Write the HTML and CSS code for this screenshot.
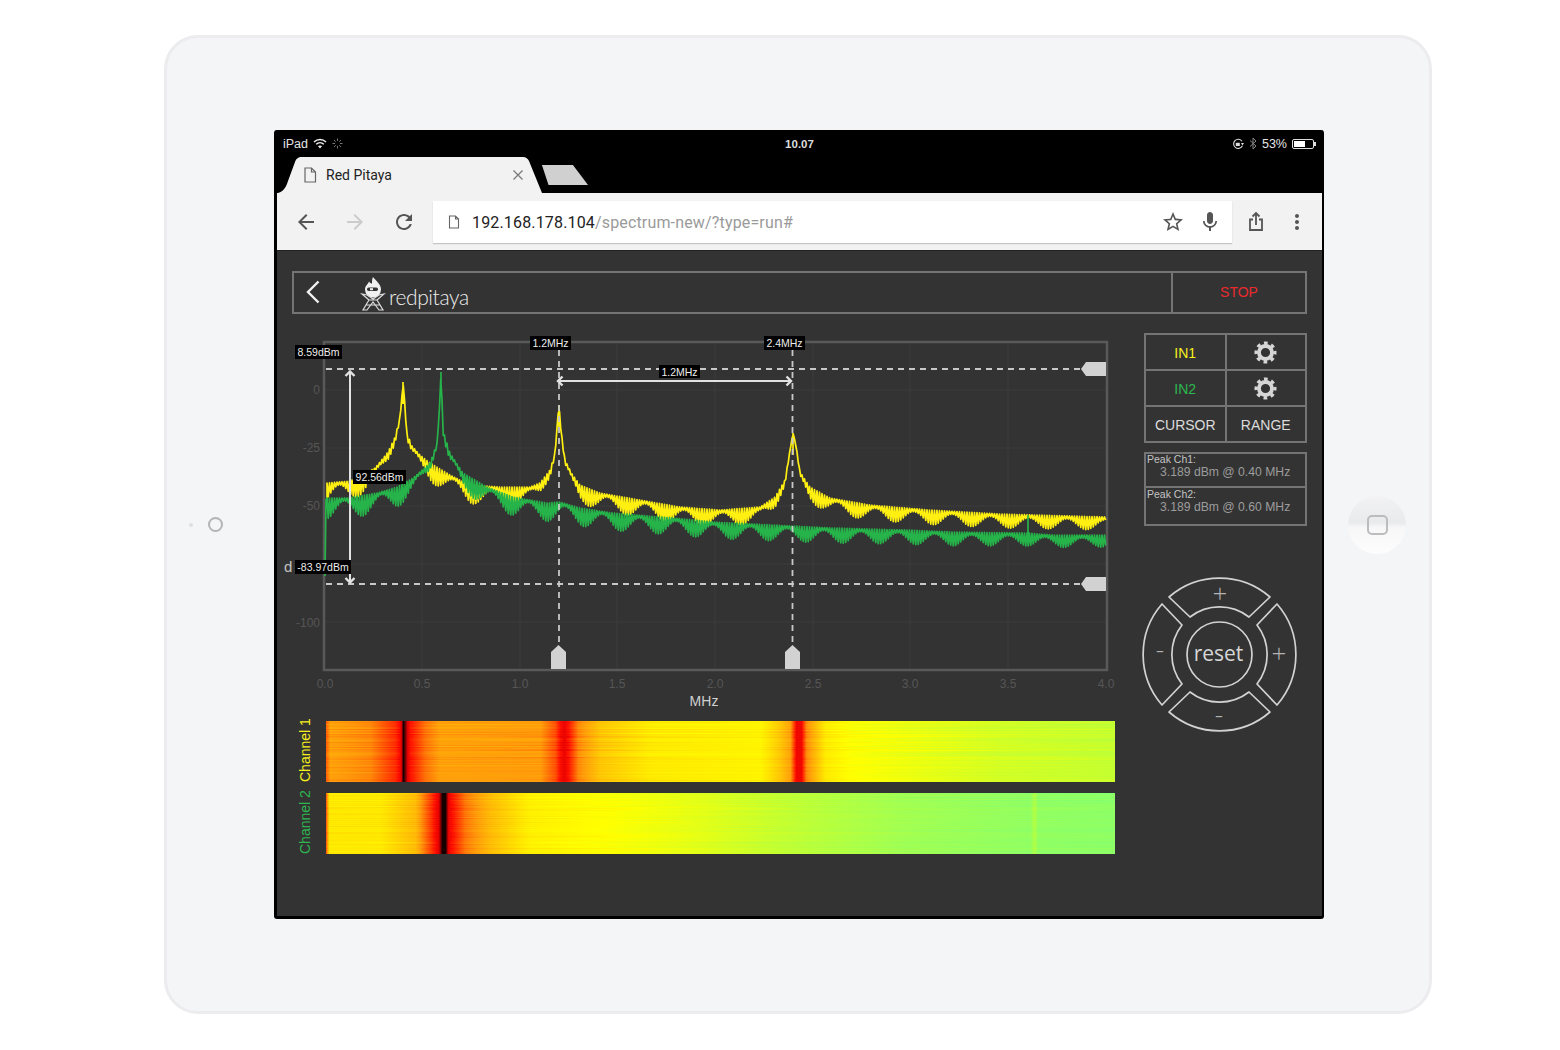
FILE: index.html
```html
<!DOCTYPE html>
<html lang="en">
<head>
    <meta charset="UTF-8">
    <meta name="viewport" content="width=device-width, initial-scale=1.0">
    <title>Red Pitaya Spectrum Analyzer</title>
    <link rel="stylesheet" href="styles.css">
</head>
<body>
    <div class="device">
        <div class="sensors">
            <span class="sensor-dot"></span>
            <span class="camera"></span>
        </div>
        <div class="screen">
            <div class="status-bar">
                <div class="status-left">
                    <span>iPad</span>
                    <svg class="wifi" width="14" height="11" viewBox="0 0 14 11">
                        <path d="M1 4 C4.5 0.8 9.5 0.8 13 4" fill="none" stroke="#eee" stroke-width="1.5"/>
                        <path d="M3.2 6.2 C5.4 4.2 8.6 4.2 10.8 6.2" fill="none" stroke="#eee" stroke-width="1.5"/>
                        <path d="M5 8.2 L7 10.4 L9 8.2 C7.8 7.2 6.2 7.2 5 8.2Z" fill="#eee"/>
                    </svg>
                    <svg class="spinner" width="11" height="11" viewBox="0 0 11 11">
                        <path d="M5.5 0.5V3M5.5 8V10.5M0.5 5.5H3M8 5.5H10.5M2 2L3.7 3.7M7.3 7.3L9 9M2 9L3.7 7.3M7.3 3.7L9 2" stroke="#777" stroke-width="1"/>
                    </svg>
                </div>
                <div class="status-time">10.07</div>
                <div class="status-right">
                    <svg width="12" height="12" viewBox="0 0 12 12">
                        <path d="M10 3.2 A4.6 4.6 0 1 0 10.4 7.8" fill="none" stroke="#ddd" stroke-width="1.1"/>
                        <path d="M9 5 L12 5 L10.4 7.6Z" fill="#ddd"/>
                        <rect x="3.8" y="4.8" width="4" height="3.2" fill="#ddd"/>
                    </svg>
                    <svg width="8" height="13" viewBox="0 0 8 13">
                        <path d="M1 3.5 L7 9 L4 12 V1 L7 4 L1 9.5" fill="none" stroke="#888" stroke-width="1"/>
                    </svg>
                    <span>53%</span>
                    <span class="battery"><span class="battery-fill"></span></span>
                </div>
            </div>
            <div class="tab-strip">
                <div class="tab">
                    <svg width="14" height="16" viewBox="0 0 14 16">
                        <path d="M2 1 H8.5 L12.5 5 V15 H2Z M8.5 1 V5 H12.5" fill="none" stroke="#666" stroke-width="1.2"/>
                    </svg>
                    <span class="tab-title">Red Pitaya</span>
                    <svg class="tab-close" width="10" height="10" viewBox="0 0 10 10">
                        <path d="M0.5 0.5 L9.5 9.5 M9.5 0.5 L0.5 9.5" stroke="#777" stroke-width="1.2"/>
                    </svg>
                </div>
                <div class="new-tab"></div>
            </div>
            <div class="toolbar">
                <div class="nav-button">
                    <svg width="24" height="24" viewBox="0 0 24 24"><path fill="#555" d="M20 11H7.83l5.59-5.59L12 4l-8 8 8 8 1.41-1.41L7.83 13H20v-2z"/></svg>
                </div>
                <div class="nav-button">
                    <svg width="24" height="24" viewBox="0 0 24 24"><path fill="#ccc" d="M12 4l-1.41 1.41L16.17 11H4v2h12.17l-5.58 5.59L12 20l8-8z"/></svg>
                </div>
                <div class="nav-button">
                    <svg width="24" height="24" viewBox="0 0 24 24"><path fill="#555" d="M17.65 6.35C16.2 4.9 14.21 4 12 4c-4.42 0-7.99 3.58-7.99 8s3.57 8 7.99 8c3.73 0 6.84-2.55 7.73-6h-2.08c-.82 2.33-3.04 4-5.65 4-3.31 0-6-2.69-6-6s2.69-6 6-6c1.66 0 3.14.69 4.22 1.78L13 11h7V4l-2.35 2.35z"/></svg>
                </div>
                <div class="url-box">
                    <svg width="12" height="14" viewBox="0 0 12 14">
                        <path d="M1.5 1 H7.5 L10.5 4 V13 H1.5Z M7.5 1 V4 H10.5" fill="none" stroke="#666" stroke-width="1.1"/>
                    </svg>
                    <span class="url-text"><span class="url-host">192.168.178.104</span>/spectrum-new/?type=run#</span>
                    <div class="url-icon">
                        <svg width="24" height="24" viewBox="0 0 24 24"><path fill="#555" d="M22 9.24l-7.19-.62L12 2 9.19 8.63 2 9.24l5.46 4.73L5.82 21 12 17.27 18.18 21l-1.63-7.03L22 9.24zM12 15.4l-3.76 2.27 1-4.28-3.32-2.88 4.38-.38L12 6.1l1.71 4.04 4.38.38-3.32 2.88 1 4.28L12 15.4z"/></svg>
                    </div>
                    <div class="url-icon">
                        <svg width="24" height="24" viewBox="0 0 24 24"><path fill="#555" d="M12 14c1.66 0 2.99-1.34 2.99-3L15 5c0-1.66-1.34-3-3-3S9 3.34 9 5v6c0 1.66 1.34 3 3 3zm5.3-3c0 3-2.54 5.1-5.3 5.1S6.7 14 6.7 11H5c0 3.41 2.72 6.23 6 6.72V21h2v-3.28c3.28-.48 6-3.3 6-6.72h-1.7z"/></svg>
                    </div>
                </div>
                <div class="tool-button">
                    <svg width="24" height="24" viewBox="0 0 24 24"><path d="M9 9.5H6V20H18V9.5H15M12 15V3.5M8.5 6.5L12 3L15.5 6.5" fill="none" stroke="#555" stroke-width="1.8"/></svg>
                </div>
                <div class="tool-button">
                    <svg width="24" height="24" viewBox="0 0 24 24"><path fill="#555" d="M12 8c1.1 0 2-.9 2-2s-.9-2-2-2-2 .9-2 2 .9 2 2 2zm0 2c-1.1 0-2 .9-2 2s.9 2 2 2 2-.9 2-2-.9-2-2-2zm0 6c-1.1 0-2 .9-2 2s.9 2 2 2 2-.9 2-2-.9-2-2-2z"/></svg>
                </div>
            </div>
            <div class="app">
                <header class="app-header">
                    <svg class="back-chevron" width="14" height="24" viewBox="0 0 14 24">
                        <path d="M12.5 1.5 L2 12 L12.5 22.5" fill="none" stroke="#f2f2f2" stroke-width="2.4"/>
                    </svg>
                    <div class="logo">
                        <svg width="26" height="36" viewBox="360 276 26 36">
                            <path d="M373 277 C376 281 381 284 381 289.500 A8 8 0 0 1 365 289.500 C365 285.500 368 284.500 369 281.500 C370 283 371 283.500 372 283.500 C372 281 372 279 373 277Z" fill="#f0f0f0"/>
                            <rect x="367" y="287.500" width="11" height="3.500" rx="1.700" fill="#333"/>
                            <rect x="370" y="288.200" width="3" height="2" fill="#f0f0f0"/>
                            <path d="M362 294 L369 300 L363 310 H367 L373 302 L379 310 H383 L377 300 L384 294 L379 295 L373 299 L367 295Z M369 300 L377 300 M366 305 L380 305" fill="none" stroke="#ddd" stroke-width="1.200"/>
                        </svg>
                        <span class="logo-text">redpitaya</span>
                    </div>
                    <div class="stop-button">STOP</div>
                </header>
                <div class="main">
                    <div class="plots">
                        <svg class="chart" width="850" height="387" viewBox="282 334 850 387">
                            <path class="grid" d="M422 342V670M520 342V670M617 342V670M715 342V670M813 342V670M910 342V670M1008 342V670M324 390H1107M324 448H1107M324 506H1107M324 564H1107M324 622H1107"/>
                            <rect class="plot-frame" x="324" y="342" width="783" height="328"/>
                            <g class="tick-y">
                                <text x="320" y="394">0</text>
                                <text x="320" y="452">-25</text>
                                <text x="320" y="510">-50</text>
                                <text x="320" y="627">-100</text>
                            </g>
                            <g class="tick-x">
                                <text x="325" y="688">0.0</text>
                                <text x="422" y="688">0.5</text>
                                <text x="520" y="688">1.0</text>
                                <text x="617" y="688">1.5</text>
                                <text x="715" y="688">2.0</text>
                                <text x="813" y="688">2.5</text>
                                <text x="910" y="688">3.0</text>
                                <text x="1008" y="688">3.5</text>
                                <text x="1106" y="688">4.0</text>
                            </g>
                            <text class="axis-title" x="704" y="706">MHz</text>
                            <path id="trace1" class="trace trace-yellow"/>
                            <path id="trace2" class="trace trace-green"/>
                            <path class="dashed" d="M326 369H1083M326 584H1083M559 350V648M792.500 350V648"/>
                            <path class="handle" d="M1081 369 L1086 362 H1106 V376 H1086Z"/>
                            <path class="handle" d="M1081 584 L1086 577 H1106 V591 H1086Z"/>
                            <path class="handle" d="M551 669 V652 L558.500 645 L566 652 V669Z"/>
                            <path class="handle" d="M785 669 V652 L792.500 645 L800 652 V669Z"/>
                            <path class="measure" d="M350 372V582M558 381H791"/>
                            <path class="measure measure-head" d="M345.500 376L350 371.500L354.500 376M345.500 578L350 582.500L354.500 578M562.500 376.500L558 381L562.500 385.500M786.500 376.500L791 381L786.500 385.500"/>
                            <g class="tags">
                                <rect x="295" y="345" width="47" height="14"/>
                                <text x="318.500" y="356">8.59dBm</text>
                                <rect x="530" y="336" width="41" height="14"/>
                                <text x="550.500" y="347">1.2MHz</text>
                                <rect x="764" y="336" width="41" height="14"/>
                                <text x="784.500" y="347">2.4MHz</text>
                                <rect x="659" y="365" width="41" height="13"/>
                                <text x="679.500" y="375.500">1.2MHz</text>
                                <rect x="353" y="470" width="53" height="14"/>
                                <text x="379.500" y="481">92.56dBm</text>
                                <rect x="295" y="560" width="56" height="14"/>
                                <text x="323" y="571">-83.97dBm</text>
                            </g>
                            <text class="cursor-letter" x="284" y="572">d</text>
                        </svg>
                        <div class="heat-row">
                            <div class="heat-label heat-label-ch1">Channel 1</div>
                            <canvas id="heat1" width="789" height="61"></canvas>
                        </div>
                        <div class="heat-row">
                            <div class="heat-label heat-label-ch2">Channel 2</div>
                            <canvas id="heat2" width="789" height="61"></canvas>
                        </div>
                    </div>
                    <aside class="controls">
                        <svg width="0" height="0" class="defs">
                            <symbol id="gear" viewBox="0 0 24 24">
                                <circle cx="12" cy="12" r="6.800" fill="none" stroke="currentColor" stroke-width="4"/>
                                <circle cx="12" cy="12" r="9.800" fill="none" stroke="currentColor" stroke-width="3.400" stroke-dasharray="3.850 3.847" stroke-dashoffset="1.900"/>
                            </symbol>
                        </svg>
                        <div class="button-grid">
                            <div class="cell cell-in1">IN1</div>
                            <div class="cell cell-gear"><svg width="23" height="23"><use href="#gear"/></svg></div>
                            <div class="cell cell-in2">IN2</div>
                            <div class="cell cell-gear"><svg width="23" height="23"><use href="#gear"/></svg></div>
                            <div class="cell">CURSOR</div>
                            <div class="cell">RANGE</div>
                        </div>
                        <div class="peak-panel">
                            <div class="peak-row">
                                <div class="peak-title">Peak Ch1:</div>
                                <div class="peak-value">3.189 dBm @ 0.40 MHz</div>
                            </div>
                            <div class="peak-row">
                                <div class="peak-title">Peak Ch2:</div>
                                <div class="peak-value">3.189 dBm @ 0.60 MHz</div>
                            </div>
                        </div>
                        <svg class="dpad" width="160" height="160" viewBox="1140 574 160 160">
                            <g class="dpad-shapes">
                                <path id="dpadSeg" d="M1169 597 A77 77 0 0 1 1270 597 L1249 617 A48 48 0 0 0 1190 617Z"/>
                                <use href="#dpadSeg" transform="rotate(90 1219.500 654.500)"/>
                                <use href="#dpadSeg" transform="rotate(180 1219.500 654.500)"/>
                                <use href="#dpadSeg" transform="rotate(270 1219.500 654.500)"/>
                                <circle cx="1219.500" cy="654.500" r="32.500"/>
                            </g>
                            <g class="dpad-signs">
                                <text x="1220" y="603">+</text>
                                <text x="1160" y="659">-</text>
                                <text x="1279" y="663">+</text>
                                <text x="1219" y="724">-</text>
                            </g>
                            <text class="dpad-reset" x="1218.500" y="660.500">reset</text>
                        </svg>
                    </aside>
                </div>
            </div>
        </div>
        <div class="home-area">
            <div class="home-button"><span class="home-square"></span></div>
        </div>
    </div>
    <script src="script.js"></script>
</body>
</html>
```

FILE: styles.css
```css
* {
    box-sizing: border-box;
}
body {
    margin: 0;
    background: #fff;
    font-family: "Liberation Sans", Arial, sans-serif;
}
.device {
    display: flex;
    width: 1268px;
    height: 979px;
    margin: 35px 0 0 164px;
    padding-top: 92px;
    background: #f4f5f7;
    border: 3px solid #ececee;
    border-radius: 34px;
}
.sensors {
    flex: 0 0 107px;
    display: flex;
    align-items: center;
    gap: 15px;
    height: 789px;
    padding-left: 22px;
}
.sensor-dot {
    width: 4px;
    height: 4px;
    border-radius: 50%;
    background: #dfdfe2;
}
.camera {
    width: 15px;
    height: 15px;
    border: 2px solid #b4b4b6;
    border-radius: 50%;
}
.screen {
    display: flex;
    flex-direction: column;
    flex: 0 0 1050px;
    height: 789px;
    background: #000;
    border-style: solid;
    border-color: #000;
    border-width: 0 2px 3px 3px;
    border-radius: 3px;
}
.home-area {
    flex: 1;
    display: flex;
    align-items: center;
    justify-content: center;
    height: 789px;
    padding-left: 1px;
}
.home-button {
    display: flex;
    align-items: center;
    justify-content: center;
    width: 58px;
    height: 58px;
    border-radius: 50%;
    background: linear-gradient(to bottom, #f2f2f4 0%, #e9eaec 46%, #f7f7f8 54%, #fdfdfd 100%);
}
.home-square {
    width: 21px;
    height: 20px;
    border: 2px solid #bcbcbe;
    border-radius: 5px;
}

/* ipad status bar */
.status-bar {
    display: grid;
    grid-template-columns: 1fr auto 1fr;
    align-items: center;
    height: 27px;
    padding: 0 6px;
    color: #e4e4e4;
    font-size: 12.5px;
}
.status-left,
.status-right {
    display: flex;
    align-items: center;
}
.status-left {
    gap: 5px;
}
.status-right {
    justify-content: flex-end;
    gap: 5px;
}
.status-time {
    font-weight: bold;
    font-size: 11.5px;
    color: #ddd;
}
.battery {
    display: block;
    position: relative;
    width: 22px;
    height: 10px;
    margin-right: 2px;
    padding: 1px;
    border: 1px solid #ddd;
    border-radius: 2px;
}
.battery::after {
    content: "";
    position: absolute;
    top: 2px;
    right: -3px;
    width: 2px;
    height: 4px;
    background: #ddd;
}
.battery-fill {
    display: block;
    width: 11px;
    height: 6px;
    background: #fff;
}

/* browser chrome */
.tab-strip {
    display: flex;
    height: 36px;
    padding-left: 1px;
}
.tab {
    display: flex;
    align-items: center;
    width: 264px;
    height: 36px;
    padding: 0 19px 0 25px;
    background: #f2f2f2;
    clip-path: path("M0 36 C6 34 8 30 10 24 L17 5 C18 2 20 0 24 0 L245 0 C248 0 250 2 251 4 L264 36 Z");
}
.tab-title {
    margin-left: 9px;
    font-family: Roboto, sans-serif;
    font-size: 14px;
    color: #222;
}
.tab-close {
    margin-left: auto;
}
.new-tab {
    width: 47px;
    height: 20px;
    margin: 8px 0 0 -1px;
    background: #d0d0d0;
    clip-path: polygon(2% 0, 68% 0, 100% 100%, 16% 100%);
}
.toolbar {
    display: flex;
    height: 58px;
    padding-left: 4px;
    background: #f2f2f2;
    border-bottom: 1px solid #222;
}
.nav-button,
.tool-button {
    display: flex;
    align-items: center;
    justify-content: center;
    height: 57px;
}
.nav-button {
    width: 49px;
}
.tool-button {
    width: 41px;
}
.url-box {
    display: flex;
    align-items: center;
    width: 799px;
    height: 42px;
    margin: 8px 3px 0 5px;
    padding: 0 4px 0 15px;
    background: #fff;
    box-shadow: 0 1px 1px #c4c4c4;
}
.url-text {
    flex: 1;
    margin-left: 12px;
    font-family: Roboto, sans-serif;
    font-size: 16px;
    letter-spacing: 0.16px;
    color: #9a9a9a;
}
.url-host {
    color: #222;
}
.url-icon {
    display: flex;
    justify-content: center;
    width: 37px;
}

/* red pitaya app */
.app {
    flex: 1;
    padding: 20px 15px 0;
    background: #333;
}
.app-header {
    display: flex;
    align-items: center;
    height: 43px;
    border: 2px solid #747474;
}
.back-chevron {
    margin: 0 0 2px 12px;
}
.logo {
    display: flex;
    align-items: flex-end;
    height: 39px;
    margin-left: 40px;
}
.logo-text {
    margin: 0 0 3px 3px;
    font-family: Lato, sans-serif;
    font-weight: 300;
    font-size: 21px;
    line-height: 24px;
    letter-spacing: -0.4px;
    color: #eee;
}
.stop-button {
    display: flex;
    align-items: center;
    justify-content: center;
    width: 134px;
    height: 100%;
    margin-left: auto;
    padding-bottom: 1px;
    border-left: 2px solid #747474;
    color: #eb2a2e;
    font-size: 14px;
}
.main {
    display: flex;
    justify-content: space-between;
    margin: 20px 0 0 -10px;
}
.plots {
    width: 850px;
}
.chart {
    display: block;
}
.grid {
    fill: none;
    stroke: #3d3d3d;
    stroke-width: 1;
}
.plot-frame {
    fill: none;
    stroke: #595959;
    stroke-width: 2.5;
}
.tick-y text,
.tick-x text {
    fill: #565656;
    font-size: 12px;
}
.tick-y text {
    text-anchor: end;
}
.tick-x text,
.axis-title,
.tags text {
    text-anchor: middle;
}
.axis-title {
    fill: #d0d0d0;
    font-size: 14px;
}
.trace {
    fill: none;
    stroke-width: 1.700;
    stroke-linejoin: round;
}
.trace-yellow {
    stroke: #fff012;
}
.trace-green {
    stroke: #26b34a;
}
.dashed {
    fill: none;
    stroke: #c8c8c8;
    stroke-width: 1.800;
    stroke-dasharray: 6 5;
}
.handle {
    fill: #d2d2d2;
}
.measure {
    fill: none;
    stroke: #e2e2e2;
    stroke-width: 2;
}
.measure-head {
    stroke-width: 2.400;
}
.tags rect {
    fill: #000;
}
.tags text {
    fill: #ededed;
    font-size: 10.500px;
}
.cursor-letter {
    fill: #c4c4c4;
    font-size: 15px;
}
.heat-row {
    display: flex;
    align-items: flex-end;
    height: 61px;
    margin-bottom: 11px;
}
.heat-label {
    flex: 0 0 44px;
    display: block;
    writing-mode: vertical-rl;
    transform: rotate(180deg);
    height: 61px;
    padding-right: 15px;
    line-height: 16px;
    font-size: 14px;
    white-space: nowrap;
}
.heat-label-ch1 {
    color: #f6f01c;
}
.heat-label-ch2 {
    color: #2fb54f;
}
.heat-row canvas {
    display: block;
    width: 789px;
    height: 61px;
}
.controls {
    width: 163px;
}
.defs {
    position: absolute;
}
.button-grid {
    display: grid;
    grid-template-columns: 1fr 1fr;
    grid-auto-rows: 36px;
    height: 110px;
    margin-top: -1px;
    border-top: 2px solid #747474;
    border-left: 2px solid #747474;
}
.cell {
    display: flex;
    align-items: center;
    justify-content: center;
    padding-top: 1px;
    border-right: 2px solid #747474;
    border-bottom: 2px solid #747474;
    color: #dcdcdc;
    font-size: 14px;
}
.cell-in1 {
    color: #f7f01e;
}
.cell-in2 {
    color: #2ab84f;
}
.cell-gear {
    color: #d6d6d6;
}
.peak-panel {
    height: 74px;
    margin-top: 9px;
    border: 2px solid #747474;
}
.peak-row {
    height: 33px;
    padding-left: 1px;
}
.peak-row + .peak-row {
    height: 37px;
    border-top: 2px solid #747474;
}
.peak-title {
    height: 12px;
    color: #c4c4c4;
    font-size: 10.500px;
    line-height: 12px;
}
.peak-row:first-child .peak-title {
    margin-top: -1px;
}
.peak-value {
    margin-left: 13px;
    color: #9c9c9c;
    font-size: 12.200px;
    line-height: 15px;
    white-space: nowrap;
}
.dpad {
    display: block;
    margin: 48px 0 0 -4px;
}
.dpad-shapes path,
.dpad-shapes circle,
.dpad-shapes use {
    fill: none;
    stroke: #d2d2d2;
    stroke-width: 1.700;
    stroke-linejoin: round;
}
.dpad-signs text {
    fill: #b4b4b4;
    font-family: "Open Sans", sans-serif;
    font-weight: 300;
    font-size: 26px;
    text-anchor: middle;
}
.dpad-reset {
    fill: #d6d6d6;
    font-family: "Open Sans", sans-serif;
    font-size: 21px;
    text-anchor: middle;
}
```

FILE: script.js
```js
// envelope tables: [page x, page y of upper edge]
var yellowTop = [[327,483],[350,481],[375,468],[388,452],[395,437],[400,417],[402,395],[403,382],[405,405],[407,433],[412,446],[420,455],[430,463],[450,475],[470,485],[500,487],[530,487],[540,483],[550,470],[555,453],[558,415],[559,405],[561,430],[565,460],[572,474],[580,485],[600,493],[640,500],[680,507],[720,510],[760,507],[775,497],[785,480],[790,450],[793,433],[796,445],[800,472],[810,487],[830,498],[870,505],[930,510],[1000,514],[1106,517]];
var greenTop = [[327,498],[348,498],[377,493],[397,487],[413,478],[430,463],[437,443],[440,400],[441,372],[442,400],[443,430],[450,453],[463,473],[487,487],[513,497],[547,503],[560,502],[580,508],[613,513],[637,515],[673,518],[713,522],[753,524],[793,526],[833,528],[907,530],[953,532],[1027,533],[1053,535],[1106,535]];

function interp(table, x) {
    if (x <= table[0][0]) return table[0][1];
    for (var i = 1; i < table.length; i++) {
        if (x <= table[i][0]) {
            var a = table[i - 1], b = table[i];
            return a[1] + (b[1] - a[1]) * (x - a[0]) / (b[0] - a[0]);
        }
    }
    return table[table.length - 1][1];
}

function buildTrace(top, peaks, phase, period, depthLeft, depthRight) {
    var d = "";
    var up = true;
    for (var x = 327; x <= 1106; x += 1.25) {
        var y = interp(top, x);
        if (!up) {
            var fade = 1;
            for (var i = 0; i < peaks.length; i++) {
                var dist = x - peaks[i];
                var f = dist < 0 ? -dist / 24 : dist / 7;
                if (f < fade) fade = f;
            }
            var c = Math.cos(Math.PI * (x - phase) / period);
            var depth = depthLeft + (depthRight - depthLeft) * (x - 327) / 780;
            y += fade * (3 + depth * c * c);
        }
        d += (x === 327 ? "M" : "L") + x + " " + y.toFixed(1);
        up = !up;
    }
    // the zigzag steps over the exact peak, so add the tips
    for (var p = 0; p < peaks.length; p++) {
        var px = peaks[p];
        d += "M" + px + " " + (interp(top, px) + 22) + "L" + px + " " + interp(top, px);
    }
    return d;
}

document.getElementById("trace1").setAttribute("d", "M327 500L327 483" + buildTrace(yellowTop, [403, 559, 793], 665, 38.3, 17, 10).replace("M", "L"));
document.getElementById("trace2").setAttribute("d", "M325 576L326 500" + buildTrace(greenTop, [441], 658, 36.9, 18, 9).replace("M", "L") + "M1028 515L1028 542");

// heat waterfalls
var colorStops = [[0,21,0,0],[0.07,224,0,0],[0.13,255,16,0],[0.33,255,156,10],[0.5,255,234,0],[0.56,255,255,0],[0.68,196,255,48],[0.88,126,255,117]];
var heat1 = [[326,0.25],[330,0.34],[370,0.3],[395,0.17],[400,0.1],[403,0],[406,0.05],[410,0.13],[425,0.27],[440,0.34],[540,0.33],[555,0.22],[560,0.12],[564,0.09],[568,0.13],[578,0.3],[600,0.42],[650,0.5],[760,0.53],[780,0.42],[790,0.34],[796,0.1],[801,0.1],[806,0.3],[825,0.5],[850,0.56],[1000,0.65],[1115,0.68]];
var heat2 = [[326,0.25],[329,0.5],[380,0.5],[415,0.4],[430,0.2],[438,0.08],[442,0],[445,0],[449,0.1],[465,0.28],[490,0.4],[530,0.52],[600,0.56],[700,0.62],[800,0.7],[900,0.78],[1030,0.83],[1034,0.74],[1038,0.83],[1115,0.84]];

function heatColor(v) {
    v = Math.max(0, Math.min(0.88, v));
    for (var i = 1; i < colorStops.length; i++) {
        if (v <= colorStops[i][0]) {
            var a = colorStops[i - 1], b = colorStops[i];
            var t = (v - a[0]) / (b[0] - a[0]);
            return [a[1] + (b[1] - a[1]) * t, a[2] + (b[2] - a[2]) * t, a[3] + (b[3] - a[3]) * t];
        }
    }
    return colorStops[colorStops.length - 1].slice(1);
}

function drawHeat(id, table, seed, amount) {
    var canvas = document.getElementById(id);
    var ctx = canvas.getContext("2d");
    var img = ctx.createImageData(canvas.width, canvas.height);
    for (var r = 0; r < canvas.height; r++) {
        seed = (seed * 1103515245 + 12345) % 2147483648;
        var noise = (seed / 2147483648 - 0.5) * amount;
        var wave = 20 + (seed % 90);
        for (var c = 0; c < canvas.width; c++) {
            var base = interp(table, c + 326);
            var band = 0.55 + 0.45 * Math.sin(c / wave + r);
            var rgb = heatColor(base > 0.1 ? base + noise * band : base);
            var p = (r * canvas.width + c) * 4;
            img.data[p] = rgb[0];
            img.data[p + 1] = rgb[1];
            img.data[p + 2] = rgb[2];
            img.data[p + 3] = 255;
        }
    }
    ctx.putImageData(img, 0, 0);
}

drawHeat("heat1", heat1, 7, 0.07);
drawHeat("heat2", heat2, 31, 0.06);
```
